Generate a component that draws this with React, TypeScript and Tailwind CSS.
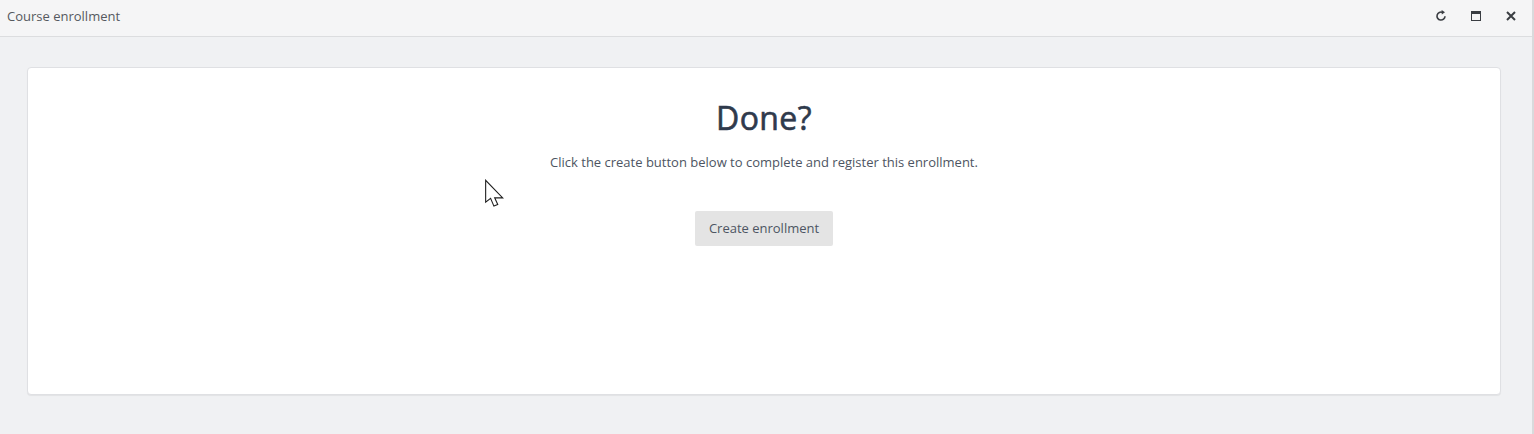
import React from "react";

export default function App() {
  return (
    <div className="flex h-[434px] w-[1534px] overflow-hidden bg-[#f0f1f3] font-['Open_Sans',sans-serif]">
      <div className="flex min-w-0 flex-1 flex-col">
        <header className="flex h-[37px] shrink-0 items-center justify-between border-b border-[#dcdddf] bg-[#f5f5f6] pb-[2px] pl-[7px] pr-[14px]">
          <span className="text-[13px] text-[#55595f]">Course enrollment</span>
          <div className="mb-[2px] flex items-center gap-[21px] text-[#3a3d42]">
            <svg width="14" height="14" viewBox="0 0 14 14" fill="none" stroke="currentColor" strokeWidth="1.6">
              <path d="M11 7.2A4 4 0 1 1 8.6 3.4" />
              <path d="M7.6 1 L11 3.2 L7.8 5.6 Z" fill="currentColor" stroke="none" />
            </svg>
            <svg width="14" height="14" viewBox="0 0 14 14" fill="none">
              <rect x="2.5" y="2.5" width="9" height="9" stroke="currentColor" />
              <rect x="2" y="2" width="10" height="3" fill="currentColor" />
            </svg>
            <svg width="14" height="14" viewBox="0 0 14 14" fill="none" stroke="currentColor" strokeWidth="2">
              <path d="M3 3 L11 11 M11 3 L3 11" />
            </svg>
          </div>
        </header>
        <main className="flex-1 pb-[39px] pl-[27px] pr-[31px] pt-[30px]">
          <section className="relative flex h-[328px] flex-col items-center rounded-[4px] border border-[#dfe0e3] bg-white shadow-[0_1px_1px_rgba(0,0,0,0.06)]">
            <h1 className="mt-[28px] text-[32px] font-normal leading-[44px] tracking-[0.4px] text-[#2f3a4c] [-webkit-text-stroke:0.6px_#2f3a4c]">Done?</h1>
            <p className="mt-[13px] text-[13px] leading-[18px] text-[#4d5562]">
              Click the create button below to complete and register this enrollment.
            </p>
            <button className="mt-[40px] h-[35px] w-[138px] rounded-[2px] bg-[#e4e4e4] text-[13px] text-[#4d5562]">
              Create enrollment
            </button>
            <svg className="absolute left-[456px] top-[111px]" width="22" height="30" viewBox="0 0 20 27" fill="#fff" stroke="#1f1f1f" strokeWidth="1">
              <path d="M1.5 1 V21 L6 17.5 L9 24.5 L12.5 23 L9.7 17 H17 Z" />
            </svg>
          </section>
        </main>
      </div>
      <div className="h-full w-[2px] bg-[#d9dadc]" />
    </div>
  );
}
